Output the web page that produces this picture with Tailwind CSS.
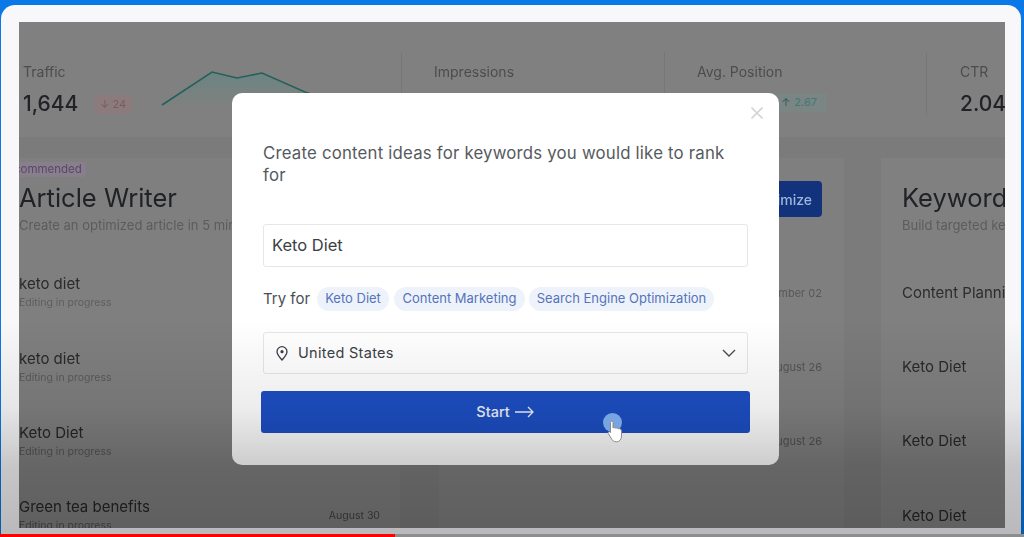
<!DOCTYPE html>
<html>
<head>
<meta charset="utf-8">
<script src="https://cdn.jsdelivr.net/npm/@tailwindcss/browser@4"></script>
</head>
<body class="m-0">
<div class="relative w-[1024px] h-[537px] overflow-hidden bg-[#0a78e6] font-['Inter','Liberation_Sans',sans-serif] flex flex-col pt-[5px] pl-[1px] pr-[3px]">
  <!-- white video frame -->
  <div class="flex-1 min-h-0 rounded-t-[14px] bg-[#f8f8fb] pl-[18px] pr-[15px] pt-[17px]">
    <!-- dimmed dashboard -->
    <div class="w-[986px] h-[506px] overflow-hidden bg-[#7b7b7b]">
      <div class="blur-[0.4px]">
      <!-- stats -->
      <div class="h-[115px] bg-[#808080] flex pt-[30px]">
        <div class="w-[383px] h-[63px] shrink-0 border-r border-[#767676] pl-[4px] pt-[10px] relative">
          <div class="text-[14px] leading-[20px] text-[#4c4c4c]">Traffic</div>
          <div class="flex items-center mt-[10px] h-[24px]">
            <span class="text-[21px] font-medium text-[#202226]">1,644</span>
            <span class="ml-[16px] h-[19px] px-[6px] rounded-[3px] bg-[#8c7b7d] text-[11px] text-[#7d5a5c] flex items-center gap-[4px]">↓ 24</span>
          </div>
          <svg class="absolute left-[139px] top-[16px]" width="190" height="40" viewBox="0 0 190 40" fill="none">
            <defs><linearGradient id="sp" x1="0" y1="0" x2="0" y2="1"><stop offset="0" stop-color="#6a8582"/><stop offset="1" stop-color="#808080"/></linearGradient></defs>
            <path d="M4 37 L54 4 L79 10 L104 5 L147 24 L188 38 Z" fill="url(#sp)"/>
            <path d="M4 37 L54 4 L79 10 L104 5 L147 24 L188 38" stroke="#25605a" stroke-width="1.6"/>
          </svg>
        </div>
        <div class="w-[263px] h-[63px] shrink-0 border-r border-[#767676] pl-[32px] pt-[10px]">
          <div class="text-[14px] leading-[20px] text-[#4c4c4c]">Impressions</div>
        </div>
        <div class="w-[262px] h-[63px] shrink-0 border-r border-[#767676] pl-[32px] pt-[10px] relative">
          <div class="text-[14px] leading-[20px] text-[#4c4c4c]">Avg. Position</div>
          <div class="absolute left-[96px] top-[41px] h-[19px] w-[66px] rounded-[3px] bg-[#7a8584] text-[11px] text-[#3f7a76] flex items-center justify-end pr-[10px] gap-[4px]"><span class="text-[#2c5f5b]">↑</span> 2.67</div>
        </div>
        <div class="flex-1 min-w-0 pl-[33px] pt-[10px]">
          <div class="text-[14px] leading-[20px] text-[#4c4c4c]">CTR</div>
          <div class="text-[21px] font-medium leading-[24px] mt-[10px] text-[#202226] whitespace-nowrap">2.04%</div>
        </div>
      </div>
      <!-- cards -->
      <div class="flex mt-[21px] gap-[40px] h-[370px]">
        <!-- Article writer -->
        <div class="w-[381px] shrink-0 bg-[#7f7f7f] pr-[20px]">
          <div class="h-[97.6px] pt-[4px]">
            <div class="-ml-[23px] w-fit h-[15px] px-[4px] rounded-[3px] bg-[#897e8b] text-[11.5px] leading-[15px] text-[#58486c] whitespace-nowrap">Recommended</div>
            <div class="text-[25.5px] leading-[32px] mt-[5px] text-[#202226] whitespace-nowrap">Article Writer</div>
            <div class="text-[13px] leading-[16px] mt-[3px] text-[#5c5c5c] whitespace-nowrap">Create an optimized article in 5 minutes</div>
          </div>
          <div class="h-[74.4px] flex flex-col justify-center"><div class="text-[15px] leading-[18px] text-[#2a2a2a]">keto diet</div><div class="text-[10.5px] leading-[14px] mt-[3px] text-[#5e5e5e]">Editing in progress</div></div>
          <div class="h-[74.4px] flex flex-col justify-center"><div class="text-[15px] leading-[18px] text-[#2a2a2a]">keto diet</div><div class="text-[10.5px] leading-[14px] mt-[3px] text-[#5a5a5a]">Editing in progress</div></div>
          <div class="h-[74.4px] flex flex-col justify-center"><div class="text-[15px] leading-[18px] text-[#262626]">Keto Diet</div><div class="text-[10.5px] leading-[14px] mt-[3px] text-[#545454]">Editing in progress</div></div>
          <div class="h-[74.4px] flex items-center justify-between"><div><div class="text-[15px] leading-[18px] text-[#262626]">Green tea benefits</div><div class="text-[10.5px] leading-[14px] mt-[3px] text-[#4c4c4c]">Editing in progress</div></div><div class="text-[10.5px] text-[#3f3f3f]">August 30</div></div>
        </div>
        <!-- Middle card -->
        <div class="w-[405px] shrink-0 bg-[#7f7f7f] pr-[22px] -ml-[1px]">
          <div class="h-[97.6px] pt-[23px] flex justify-end items-start">
            <div class="h-[36px] w-[100px] rounded-[4px] bg-[#12327c] text-[14px] font-medium text-[#9db7dc] flex items-center justify-end pr-[10px]">Optimize</div>
          </div>
          <div class="h-[74.4px] flex items-center justify-end text-[11px] text-[#585858]">September 02</div>
          <div class="h-[74.4px] flex items-center justify-end text-[11px] text-[#545454]">August 26</div>
          <div class="h-[74.4px] flex items-center justify-end text-[11px] text-[#505050]">August 26</div>
        </div>
        <!-- Keyword card -->
        <div class="flex-1 min-w-0 bg-[#808080] -ml-[3px] pl-[21px] overflow-hidden">
          <div class="h-[97.6px] pt-[24px]">
            <div class="text-[25.5px] leading-[32px] text-[#202226] whitespace-nowrap">Keyword Research</div>
            <div class="text-[13px] leading-[16px] mt-[3px] text-[#5c5c5c] whitespace-nowrap">Build targeted keywords</div>
          </div>
          <div class="h-[74.4px] flex items-center text-[15px] text-[#2c2c2c] whitespace-nowrap">Content Planning</div>
          <div class="h-[74.4px] flex items-center text-[15px] text-[#2a2a2a]">Keto Diet</div>
          <div class="h-[74.4px] flex items-center text-[15px] text-[#282828]">Keto Diet</div>
          <div class="h-[74.4px] flex items-center text-[15px] text-[#262626]">Keto Diet</div>
        </div>
      </div>
      </div>
    </div>
  </div>
  <!-- progress bar -->
  <div class="relative z-10 -ml-[1px] -mr-[3px] h-[3px] bg-[#8d8d8d] shrink-0"><div class="h-full w-[395px] bg-[#f00]"></div></div>

  <!-- modal -->
  <div class="absolute left-[232px] top-[93px] w-[547px] h-[372px] rounded-[10px] bg-white pl-[31px] pr-[31px] pt-[49px]">
    <svg class="absolute left-[519px] top-[14px]" width="12" height="12" viewBox="0 0 12 12" fill="none" stroke="#d4d4d4" stroke-width="1.6"><path d="M0.5 0.5 L11.5 11.5 M11.5 0.5 L0.5 11.5"/></svg>
    <p class="text-[16.8px] leading-[22px] text-[#565a60] tracking-[0.2px] pr-[15px]">Create content ideas for keywords you would like to rank for</p>
    <div class="mt-[38px] h-[43px] rounded-[3px] border border-[#e5e7eb] flex items-center pl-[8px] text-[16.5px] text-[#3c4046]">Keto Diet</div>
    <div class="mt-[20px] h-[24px] flex items-center">
      <span class="text-[15px] text-[#4b4f55] w-[54px]">Try for</span>
      <span class="h-[24px] w-[72px] rounded-full bg-[#eef2fa] text-[13px] text-[#5574ba] flex items-center justify-center">Keto Diet</span>
      <span class="ml-[5px] h-[24px] w-[131px] rounded-full bg-[#eef2fa] text-[13px] text-[#5574ba] flex items-center justify-center">Content Marketing</span>
      <span class="ml-[4px] h-[24px] w-[185px] rounded-full bg-[#eef2fa] text-[13px] text-[#5574ba] flex items-center justify-center">Search Engine Optimization</span>
    </div>
    <div class="mt-[21px] h-[42px] rounded-[3px] border border-[#e5e7eb] flex items-center pl-[12px] pr-[11px] text-[14.5px] text-[#3c4046] tracking-[0.3px]">
      <svg width="12" height="15" viewBox="0 0 12 15" fill="none" stroke="#3c4046" stroke-width="1.3"><path d="M6 14 C3 10.5 1 8.5 1 5.7 A5 5 0 0 1 11 5.7 C11 8.5 9 10.5 6 14 Z"/><circle cx="6" cy="5.7" r="1.6" fill="#3c4046" stroke="none"/></svg>
      <span class="ml-[10px]">United States</span>
      <svg class="ml-auto" width="14" height="8" viewBox="0 0 14 8" fill="none" stroke="#4b4f55" stroke-width="1.4"><path d="M1 1 L7 7 L13 1"/></svg>
    </div>
    <div class="-mx-[2px] mt-[17px] h-[42px] rounded-[3px] bg-[#1d4fc4] flex items-center justify-center gap-[5px] text-[14.5px] text-[#eef2fa] font-medium pr-[1px]">
      Start
      <svg width="19" height="12" viewBox="0 0 19 12" fill="none" stroke="#eef2fa" stroke-width="1.3"><path d="M0 6 H18 M13 1 L18 6 L13 11"/></svg>
    </div>
  </div>

  <!-- video bottom shade -->
  <div class="absolute left-0 right-0 top-[320px] h-[217px] pointer-events-none bg-[linear-gradient(to_bottom,rgba(0,0,0,0)_0%,rgba(0,0,0,0.07)_40%,rgba(0,0,0,0.2)_68%,rgba(0,0,0,0.25)_100%)]"></div>

  <!-- cursor -->
  <div class="absolute left-[603px] top-[413px] w-[19px] h-[19px] rounded-full bg-[#78a5e2]"></div>
  <svg class="absolute left-[607px] top-[420px]" width="16" height="23" viewBox="0 0 16 23" fill="#ffffff" stroke="#8a8a8a" stroke-width="1"><path d="M3.5 2.5 C3.5 0.7 6 0.7 6 2.5 V8 C7 7.3 8.2 7.4 8.7 8.2 C9.6 7.7 10.8 8 11.2 8.8 C12.3 8.4 14.5 8.8 14.5 11 V16 C14.5 19.5 12.5 21.8 9.5 21.8 C6.5 21.8 5.5 20.5 4 18 L1.3 13.5 C0.5 12 2.3 11 3.5 12.5 Z"/></svg>
</div>
</body>
</html>
